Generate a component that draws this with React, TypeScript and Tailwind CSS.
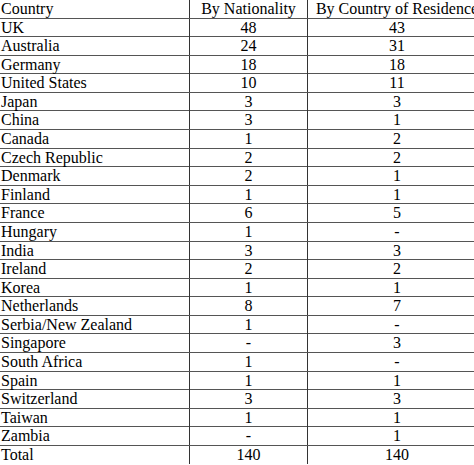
const rows: [string, string, string][] = [
  ['UK', '48', '43'],
  ['Australia', '24', '31'],
  ['Germany', '18', '18'],
  ['United States', '10', '11'],
  ['Japan', '3', '3'],
  ['China', '3', '1'],
  ['Canada', '1', '2'],
  ['Czech Republic', '2', '2'],
  ['Denmark', '2', '1'],
  ['Finland', '1', '1'],
  ['France', '6', '5'],
  ['Hungary', '1', '-'],
  ['India', '3', '3'],
  ['Ireland', '2', '2'],
  ['Korea', '1', '1'],
  ['Netherlands', '8', '7'],
  ['Serbia/New Zealand', '1', '-'],
  ['Singapore', '-', '3'],
  ['South Africa', '1', '-'],
  ['Spain', '1', '1'],
  ['Switzerland', '3', '3'],
  ['Taiwan', '1', '1'],
  ['Zambia', '-', '1'],
];

function Row({ cells, last }: { cells: [string, string, string]; last?: boolean }) {
  return (
    <div
      className={`grid h-[18.58px] grid-cols-[190px_118px_182px] items-center ${
        last ? '' : 'border-b border-[#555]'
      }`}
    >
      <div className="flex h-full items-center border-r border-[#333] pl-[1px]">{cells[0]}</div>
      <div className="flex h-full items-center justify-center border-r border-[#333]">{cells[1]}</div>
      <div className="flex h-full items-center justify-center pr-[4px]">{cells[2]}</div>
    </div>
  );
}

export default function App() {
  return (
    <div className="h-[465px] w-[474px] overflow-hidden bg-white text-black">
      <div
        className="w-[490px] text-[16px] leading-[18px]"
        style={{ fontFamily: '"Liberation Serif", "Times New Roman", serif' }}
      >
        <Row cells={['Country', 'By Nationality', 'By Country of Residence']} />
        {rows.map((r) => (
          <Row key={r[0]} cells={r} />
        ))}
        <Row cells={['Total', '140', '140']} last />
      </div>
    </div>
  );
}
